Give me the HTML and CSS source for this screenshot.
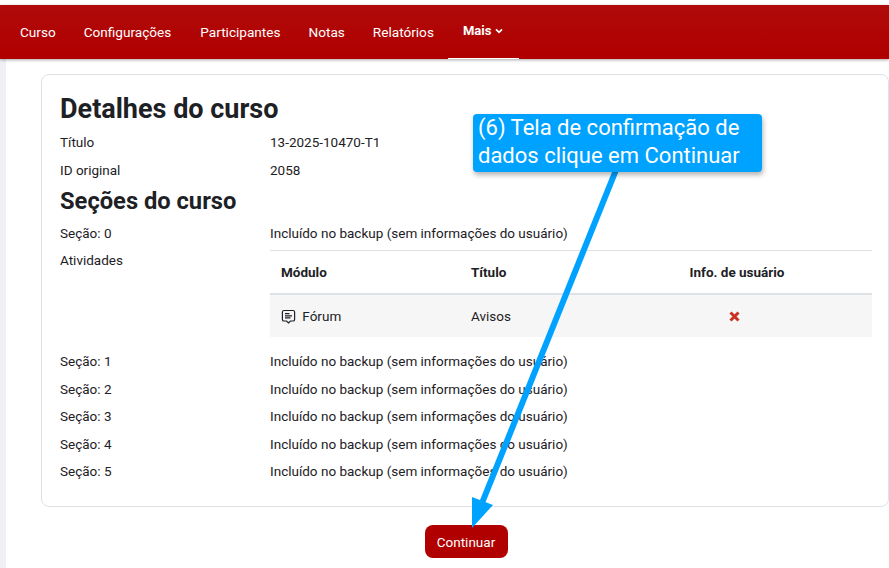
FILE: index.html
```html
<!DOCTYPE html>
<html lang="pt-BR">
<head>
  <meta charset="UTF-8" />
  <title>Detalhes do curso</title>
  <link rel="stylesheet" href="styles.css">
</head>
<body>
  <nav class="topnav">
    <a href="#">Curso</a>
    <a href="#" class="wide">Configurações</a>
    <a href="#">Participantes</a>
    <a href="#">Notas</a>
    <a href="#">Relatórios</a>
    <a href="#" class="active">Mais
      <svg class="chev" width="8" height="6" viewBox="0 0 8 6"><path d="M1 1.4 4 4.4 7 1.4" fill="none" stroke="#fff" stroke-width="1.7"/></svg>
    </a>
  </nav>

  <main class="page">
    <section class="card">
      <h2 class="first">Detalhes do curso</h2>
      <div class="row"><span>Título</span><span>13-2025-10470-T1</span></div>
      <div class="row"><span>ID original</span><span>2058</span></div>

      <h2 class="second">Seções do curso</h2>
      <div class="row"><span>Seção: 0</span><span>Incluído no backup (sem informações do usuário)</span></div>
      <div class="row activities">
        <span>Atividades</span>
        <table>
          <thead>
            <tr><th class="c1">Módulo</th><th class="c2">Título</th><th class="c3">Info. de usuário</th></tr>
          </thead>
          <tbody>
            <tr>
              <td class="c1">
                <svg class="forum" width="15" height="15" viewBox="0 0 15 15"><path d="M3 1.5h9A1.6 1.6 0 0 1 13.6 3v7.4A1.6 1.6 0 0 1 12 12H9.5l-2 2-2-2H3a1.6 1.6 0 0 1-1.6-1.6V3A1.6 1.6 0 0 1 3 1.500z" fill="none" stroke="#1d2125" stroke-width="1.2"/><path d="M4 4.700h4.500M4 6.800h7M4 8.900h5.500" stroke="#1d2125" stroke-width="1.200"/></svg>
                Fórum
              </td>
              <td class="c2">Avisos</td>
              <td class="c3"><svg class="cross" width="11" height="11" viewBox="0 0 11 11"><path d="M1.500 1.500l8 8M9.500 1.500l-8 8" stroke="#ca3120" stroke-width="3"/></svg></td>
            </tr>
          </tbody>
        </table>
      </div>
      <div class="row"><span>Seção: 1</span><span>Incluído no backup (sem informações do usuário)</span></div>
      <div class="row"><span>Seção: 2</span><span>Incluído no backup (sem informações do usuário)</span></div>
      <div class="row"><span>Seção: 3</span><span>Incluído no backup (sem informações do usuário)</span></div>
      <div class="row"><span>Seção: 4</span><span>Incluído no backup (sem informações do usuário)</span></div>
      <div class="row"><span>Seção: 5</span><span>Incluído no backup (sem informações do usuário)</span></div>
    </section>
    <div class="actions"><button type="button">Continuar</button></div>
  </main>

  <!-- annotation over the page -->
  <svg class="arrow" width="889" height="568" viewBox="0 0 889 568">
    <path d="M616 170 480 508" stroke="#00a2ff" stroke-width="6" fill="none"/>
    <path d="M472 528V497L493 505z" fill="#00a2ff"/>
  </svg>
  <div class="callout">(6) Tela de confirmação de dados clique em Continuar</div>
</body>
</html>
```

FILE: styles.css
```css
html, body {
  margin: 0;
  padding: 0;
  height: 568px;
  overflow: hidden;
}
body {
  font-family: Roboto, sans-serif;
  font-size: 13.5px;
  color: #1d2125;
  background: #fff;
  padding-top: 5px;
  box-sizing: border-box;
}
.topnav {
  display: flex;
  height: 54px;
  padding-left: 6px;
  background: linear-gradient(#b00a0a, #b00000);
  box-shadow: 0 1px 3px rgba(0, 0, 0, 0.35);
  position: relative;
}
.topnav a {
  color: #fff;
  font-size: 13.6px;
  text-decoration: none;
  line-height: 54px;
  padding: 0 14px;
}
.topnav a.wide {
  padding-right: 15px;
}
.topnav a.active {
  font-weight: 700;
  font-size: 13px;
  line-height: 52px;
  padding: 0 15px;
  width: 71px;
  height: 54px;
  border-bottom: 1px solid #fff;
  box-sizing: border-box;
}
.chev {
  vertical-align: 1px;
}
.page {
  margin-left: 6px;
  padding: 15px 0 0 35px;
  box-shadow: -6px 0 0 #eff1f5;
  height: 509px;
  box-sizing: border-box;
}
.card {
  box-sizing: border-box;
  height: 433px;
  padding: 18px 16px 0 18px;
  border: 1px solid #dee2e6;
  border-radius: 8px;
}
h2 {
  margin: 0;
  font-weight: 700;
  line-height: 32px;
}
h2.first {
  font-size: 27px;
  margin-bottom: 3px;
}
h2.second {
  font-size: 23.7px;
  margin: 2px 0;
}
.row {
  display: grid;
  grid-template-columns: 210px 1fr;
  padding-top: 1px;
  line-height: 26.5px;
}
.row.activities {
  padding-top: 0;
  line-height: 27.5px;
}
.activities table {
  margin-top: 3.5px;
}
table {
  width: 100%;
  border-collapse: collapse;
  table-layout: fixed;
}
th, td {
  padding: 2px 11px 0;
  text-align: left;
}
th {
  font-weight: 700;
  height: 40px;
  border-top: 1px solid #dee2e6;
  border-bottom: 2px solid #dee2e6;
}
td {
  height: 40px;
  background: #f6f6f6;
}
.c1 { width: 168px; }
.c2 { width: 120px; }
th.c3, td.c3 { text-align: center; }
.forum {
  vertical-align: -3px;
  margin-right: 3px;
}
.cross {
  vertical-align: -1px;
  margin-right: 6px;
}
.activities + .row {
  margin-top: 10px;
}
.actions {
  display: flex;
  justify-content: center;
  margin-top: 18px;
  padding-left: 2px;
}
button {
  font-family: Roboto, sans-serif;
  font-size: 13.5px;
  color: #fff;
  background: #b00000;
  border: 0;
  border-radius: 8px;
  width: 83px;
  height: 33px;
  padding: 0;
}
.arrow {
  position: absolute;
  left: 0;
  top: 0;
}
.callout {
  position: absolute;
  left: 473px;
  top: 114px;
  width: 289px;
  height: 58px;
  box-sizing: border-box;
  padding: 0 5px;
  background: #00a2ff;
  color: #fff;
  font-size: 22px;
  line-height: 28px;
  border-radius: 4px;
  box-shadow: 1px 3px 5px rgba(0, 0, 0, 0.3);
}
```
